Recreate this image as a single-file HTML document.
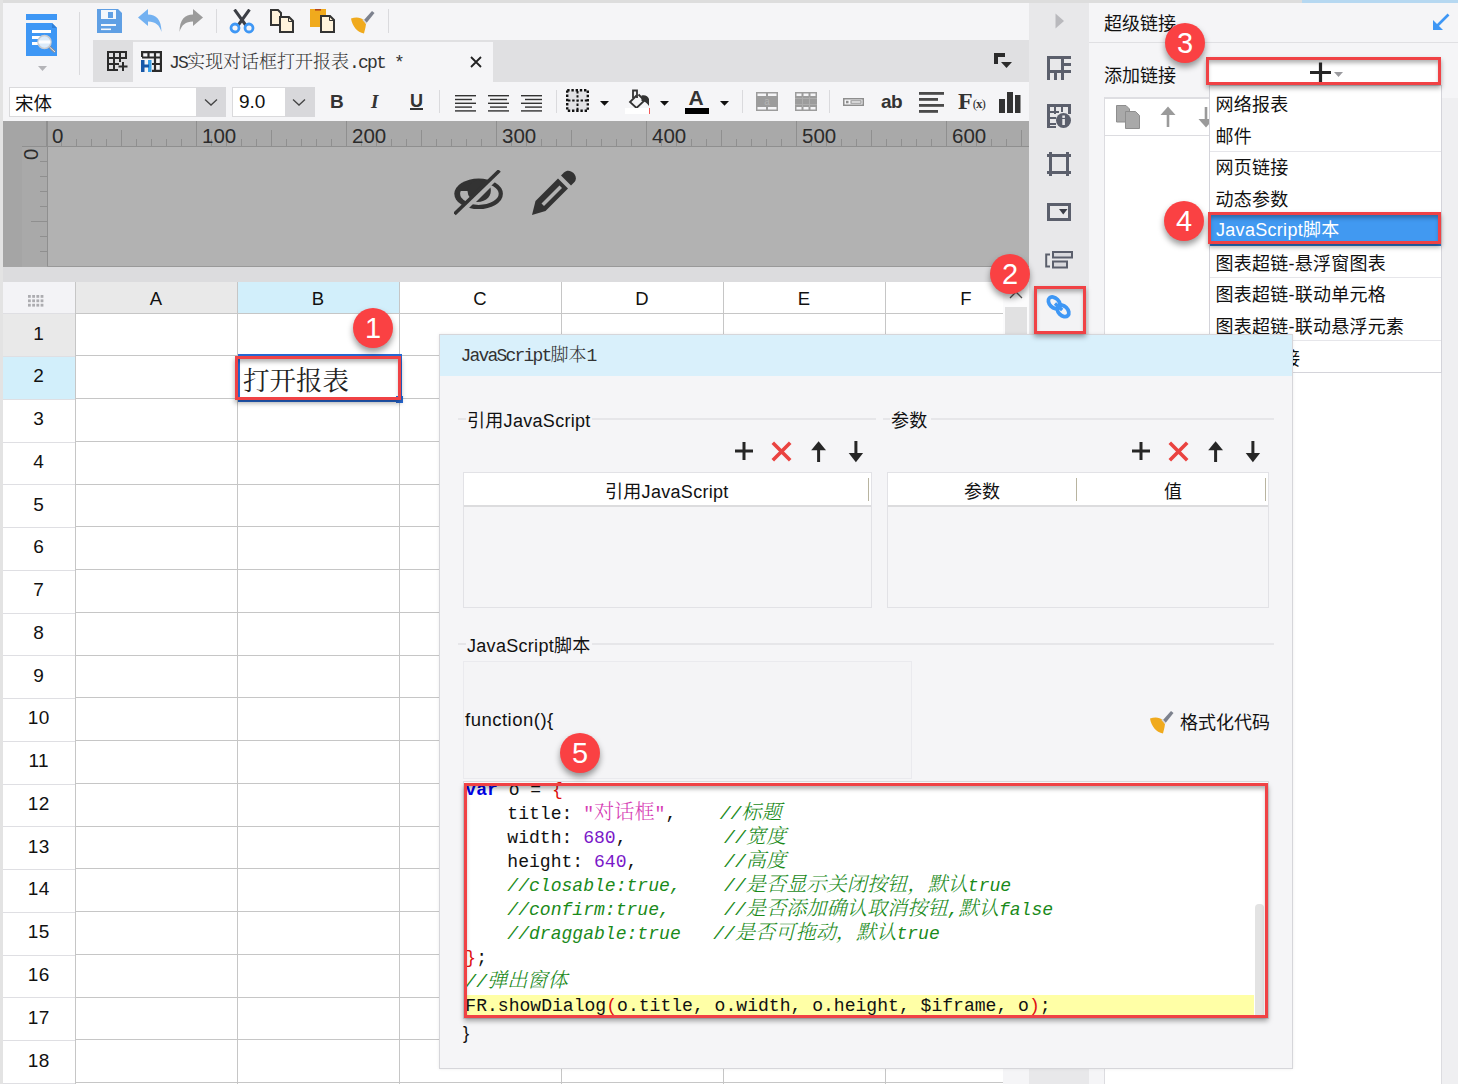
<!DOCTYPE html><html lang="zh"><head><meta charset="utf-8"><title>JS</title><style>
*{box-sizing:border-box;margin:0;padding:0}
html,body{width:1458px;height:1084px;overflow:hidden;background:#f5f5f7}
body{position:relative;font-family:"Liberation Sans","Noto Sans CJK SC",sans-serif;color:#111;font-size:18px}
.a{position:absolute}
.t{position:absolute;white-space:nowrap;line-height:1}
.song{font-family:"Liberation Serif","Noto Serif CJK SC",serif;font-weight:300}
.song i{font-style:normal;font-family:"Liberation Mono",monospace;font-weight:400;letter-spacing:-1.8px}
.badge{position:absolute;width:40px;height:40px;border-radius:50%;background:#fa4143;color:#fff;font-size:29px;line-height:40px;text-align:center;box-shadow:0 4px 6px rgba(0,0,0,.4);font-family:"Liberation Sans",sans-serif}
.redbox{position:absolute;border:3px solid #f04245;box-shadow:0 3px 5px rgba(0,0,0,.35), inset 0 4px 4px -1px rgba(0,0,0,.3)}
.mono{font-family:"Liberation Mono","Noto Serif CJK SC",monospace}
.mono u{display:inline-block;width:42px;text-decoration:none}
.mono b{font-weight:300;font-size:20.2px;line-height:0;font-family:"Liberation Serif","Noto Serif CJK SC",serif}
</style></head><body>
<div class="a" style="left:0;top:0;width:1302px;height:3px;background:#dddddd"></div>
<div class="a" style="left:1302px;top:0;width:156px;height:3px;background:#b6d8f1"></div>
<div class="a" style="left:0;top:0;width:3px;height:1084px;background:#e3e3e3"></div>
<div class="a" style="left:93px;top:40px;width:936px;height:42px;background:#e0e0e2"></div>
<div class="a" style="left:93px;top:40px;width:40px;height:42px;background:#dedee0"></div>
<div class="a" style="left:133px;top:42px;width:360px;height:40px;background:#f5f5f7"></div>
<div class="t song" style="left:169px;top:53px;font-size:18px;color:#333"><i>JS</i>实现对话框打开报表<i>.cpt *</i></div>
<div class="a" style="left:9px;top:87px;width:217px;height:30px;background:#fff;border:1px solid #dadadc"></div>
<div class="a" style="left:196px;top:87px;width:30px;height:30px;background:#d8d8db"></div>
<div class="t" style="left:15px;top:94.5px;font-size:18.5px">宋体</div>
<div class="a" style="left:232px;top:87px;width:83px;height:30px;background:#fff;border:1px solid #dadadc"></div>
<div class="a" style="left:285px;top:87px;width:30px;height:30px;background:#d8d8db"></div>
<div class="t" style="left:239px;top:92px;font-size:19px">9.0</div>
<div class="a" style="left:3px;top:121px;width:1026px;height:146px;background:#a9a9a9"></div>
<div class="a" style="left:3px;top:121px;width:19px;height:146px;background:#a5a5a5"></div>
<div class="a" style="left:22px;top:121px;width:25px;height:25px;background:#a5a5a5"></div>
<div class="a" style="left:48px;top:147px;width:981px;height:119px;background:#b2b2b2"></div>
<svg class="a" style="left:0;top:0" width="1029" height="268" viewBox="0 0 1029 268"><g stroke="#8f8f8f" stroke-width="1" shape-rendering="crispEdges"><line x1="47" y1="146.5" x2="1029" y2="146.5"/><line x1="47.5" y1="121" x2="47.5" y2="267"/><line x1="22" y1="146.5" x2="47" y2="146.5"/><line x1="47" y1="266.5" x2="1029" y2="266.5" stroke="#999"/><line x1="46.5" y1="121" x2="46.5" y2="146"/><line x1="61.5" y1="139" x2="61.5" y2="146"/><line x1="76.5" y1="139" x2="76.5" y2="146"/><line x1="91.5" y1="139" x2="91.5" y2="146"/><line x1="106.5" y1="139" x2="106.5" y2="146"/><line x1="121.5" y1="130" x2="121.5" y2="146"/><line x1="136.5" y1="139" x2="136.5" y2="146"/><line x1="151.5" y1="139" x2="151.5" y2="146"/><line x1="166.5" y1="139" x2="166.5" y2="146"/><line x1="181.5" y1="139" x2="181.5" y2="146"/><line x1="196.5" y1="121" x2="196.5" y2="146"/><line x1="211.5" y1="139" x2="211.5" y2="146"/><line x1="226.5" y1="139" x2="226.5" y2="146"/><line x1="241.5" y1="139" x2="241.5" y2="146"/><line x1="256.5" y1="139" x2="256.5" y2="146"/><line x1="271.5" y1="130" x2="271.5" y2="146"/><line x1="286.5" y1="139" x2="286.5" y2="146"/><line x1="301.5" y1="139" x2="301.5" y2="146"/><line x1="316.5" y1="139" x2="316.5" y2="146"/><line x1="331.5" y1="139" x2="331.5" y2="146"/><line x1="346.5" y1="121" x2="346.5" y2="146"/><line x1="361.5" y1="139" x2="361.5" y2="146"/><line x1="376.5" y1="139" x2="376.5" y2="146"/><line x1="391.5" y1="139" x2="391.5" y2="146"/><line x1="406.5" y1="139" x2="406.5" y2="146"/><line x1="421.5" y1="130" x2="421.5" y2="146"/><line x1="436.5" y1="139" x2="436.5" y2="146"/><line x1="451.5" y1="139" x2="451.5" y2="146"/><line x1="466.5" y1="139" x2="466.5" y2="146"/><line x1="481.5" y1="139" x2="481.5" y2="146"/><line x1="496.5" y1="121" x2="496.5" y2="146"/><line x1="511.5" y1="139" x2="511.5" y2="146"/><line x1="526.5" y1="139" x2="526.5" y2="146"/><line x1="541.5" y1="139" x2="541.5" y2="146"/><line x1="556.5" y1="139" x2="556.5" y2="146"/><line x1="571.5" y1="130" x2="571.5" y2="146"/><line x1="586.5" y1="139" x2="586.5" y2="146"/><line x1="601.5" y1="139" x2="601.5" y2="146"/><line x1="616.5" y1="139" x2="616.5" y2="146"/><line x1="631.5" y1="139" x2="631.5" y2="146"/><line x1="646.5" y1="121" x2="646.5" y2="146"/><line x1="661.5" y1="139" x2="661.5" y2="146"/><line x1="676.5" y1="139" x2="676.5" y2="146"/><line x1="691.5" y1="139" x2="691.5" y2="146"/><line x1="706.5" y1="139" x2="706.5" y2="146"/><line x1="721.5" y1="130" x2="721.5" y2="146"/><line x1="736.5" y1="139" x2="736.5" y2="146"/><line x1="751.5" y1="139" x2="751.5" y2="146"/><line x1="766.5" y1="139" x2="766.5" y2="146"/><line x1="781.5" y1="139" x2="781.5" y2="146"/><line x1="796.5" y1="121" x2="796.5" y2="146"/><line x1="811.5" y1="139" x2="811.5" y2="146"/><line x1="826.5" y1="139" x2="826.5" y2="146"/><line x1="841.5" y1="139" x2="841.5" y2="146"/><line x1="856.5" y1="139" x2="856.5" y2="146"/><line x1="871.5" y1="130" x2="871.5" y2="146"/><line x1="886.5" y1="139" x2="886.5" y2="146"/><line x1="901.5" y1="139" x2="901.5" y2="146"/><line x1="916.5" y1="139" x2="916.5" y2="146"/><line x1="931.5" y1="139" x2="931.5" y2="146"/><line x1="946.5" y1="121" x2="946.5" y2="146"/><line x1="961.5" y1="139" x2="961.5" y2="146"/><line x1="976.5" y1="139" x2="976.5" y2="146"/><line x1="991.5" y1="139" x2="991.5" y2="146"/><line x1="1006.5" y1="139" x2="1006.5" y2="146"/><line x1="1021.5" y1="130" x2="1021.5" y2="146"/><line x1="40" y1="161.5" x2="47" y2="161.5"/><line x1="40" y1="176.5" x2="47" y2="176.5"/><line x1="40" y1="191.5" x2="47" y2="191.5"/><line x1="40" y1="206.5" x2="47" y2="206.5"/><line x1="31" y1="221.5" x2="47" y2="221.5"/><line x1="40" y1="236.5" x2="47" y2="236.5"/><line x1="40" y1="251.5" x2="47" y2="251.5"/></g><g font-family="Liberation Sans, sans-serif" font-size="20.5" fill="#2b2b2b"><text x="52" y="143">0</text><text x="202" y="143">100</text><text x="352" y="143">200</text><text x="502" y="143">300</text><text x="652" y="143">400</text><text x="802" y="143">500</text><text x="952" y="143">600</text><text transform="translate(38,160) rotate(-90)" x="0" y="0">0</text></g></svg>
<div class="a" style="left:3px;top:267px;width:1026px;height:15px;background:#dcdcde"></div>
<div class="a" style="left:3px;top:282px;width:1000px;height:802px;background:#fff"></div>
<div class="a" style="left:3px;top:282px;width:73px;height:31px;background:#f3f3f6"></div>
<div class="a" style="left:76px;top:282px;width:162px;height:31px;background:#e9e9e9"></div>
<div class="a" style="left:238px;top:282px;width:162px;height:31px;background:#d2effb"></div>
<div class="a" style="left:3px;top:314px;width:73px;height:42px;background:#e9e9e9"></div>
<div class="a" style="left:3px;top:356px;width:73px;height:43px;background:#d2effb"></div>
<svg class="a" style="left:0;top:0" width="1003" height="1084" viewBox="0 0 1003 1084" shape-rendering="crispEdges"><g stroke="#c6c6c6" stroke-width="1"><line x1="75.5" y1="282" x2="75.5" y2="1084"/><line x1="237.5" y1="282" x2="237.5" y2="1084"/><line x1="399.5" y1="282" x2="399.5" y2="1084"/><line x1="561.5" y1="282" x2="561.5" y2="1084"/><line x1="723.5" y1="282" x2="723.5" y2="1084"/><line x1="885.5" y1="282" x2="885.5" y2="1084"/><line x1="1047.5" y1="282" x2="1047.5" y2="1084"/><line x1="76" y1="313.5" x2="1003" y2="313.5"/><line x1="76" y1="355.5" x2="1003" y2="355.5"/><line x1="76" y1="398.5" x2="1003" y2="398.5"/><line x1="76" y1="441.5" x2="1003" y2="441.5"/><line x1="76" y1="484.5" x2="1003" y2="484.5"/><line x1="76" y1="526.5" x2="1003" y2="526.5"/><line x1="76" y1="569.5" x2="1003" y2="569.5"/><line x1="76" y1="612.5" x2="1003" y2="612.5"/><line x1="76" y1="655.5" x2="1003" y2="655.5"/><line x1="76" y1="697.5" x2="1003" y2="697.5"/><line x1="76" y1="740.5" x2="1003" y2="740.5"/><line x1="76" y1="783.5" x2="1003" y2="783.5"/><line x1="76" y1="826.5" x2="1003" y2="826.5"/><line x1="76" y1="868.5" x2="1003" y2="868.5"/><line x1="76" y1="911.5" x2="1003" y2="911.5"/><line x1="76" y1="954.5" x2="1003" y2="954.5"/><line x1="76" y1="997.5" x2="1003" y2="997.5"/><line x1="76" y1="1039.5" x2="1003" y2="1039.5"/><line x1="76" y1="1082.5" x2="1003" y2="1082.5"/></g><g stroke="#dfdfe3" stroke-width="1"><line x1="3" y1="313.5" x2="75" y2="313.5"/><line x1="3" y1="356.5" x2="75" y2="356.5"/><line x1="3" y1="399.5" x2="75" y2="399.5"/><line x1="3" y1="442.5" x2="75" y2="442.5"/><line x1="3" y1="484.5" x2="75" y2="484.5"/><line x1="3" y1="527.5" x2="75" y2="527.5"/><line x1="3" y1="570.5" x2="75" y2="570.5"/><line x1="3" y1="613.5" x2="75" y2="613.5"/><line x1="3" y1="655.5" x2="75" y2="655.5"/><line x1="3" y1="698.5" x2="75" y2="698.5"/><line x1="3" y1="741.5" x2="75" y2="741.5"/><line x1="3" y1="784.5" x2="75" y2="784.5"/><line x1="3" y1="826.5" x2="75" y2="826.5"/><line x1="3" y1="869.5" x2="75" y2="869.5"/><line x1="3" y1="912.5" x2="75" y2="912.5"/><line x1="3" y1="955.5" x2="75" y2="955.5"/><line x1="3" y1="997.5" x2="75" y2="997.5"/><line x1="3" y1="1040.5" x2="75" y2="1040.5"/><line x1="3" y1="1083.5" x2="75" y2="1083.5"/></g><g font-family="Liberation Sans, sans-serif" font-size="18.5" fill="#111" text-anchor="middle"><text x="156" y="305">A</text><text x="318" y="305">B</text><text x="480" y="305">C</text><text x="642" y="305">D</text><text x="804" y="305">E</text><text x="966" y="305">F</text><text x="38.7" y="339.7" font-size="19" letter-spacing="0.4">1</text><text x="38.7" y="382.4" font-size="19" letter-spacing="0.4">2</text><text x="38.7" y="425.2" font-size="19" letter-spacing="0.4">3</text><text x="38.7" y="467.9" font-size="19" letter-spacing="0.4">4</text><text x="38.7" y="510.7" font-size="19" letter-spacing="0.4">5</text><text x="38.7" y="553.4" font-size="19" letter-spacing="0.4">6</text><text x="38.7" y="596.2" font-size="19" letter-spacing="0.4">7</text><text x="38.7" y="638.9" font-size="19" letter-spacing="0.4">8</text><text x="38.7" y="681.7" font-size="19" letter-spacing="0.4">9</text><text x="38.7" y="724.4" font-size="19" letter-spacing="0.4">10</text><text x="38.7" y="767.2" font-size="19" letter-spacing="0.4">11</text><text x="38.7" y="809.9" font-size="19" letter-spacing="0.4">12</text><text x="38.7" y="852.7" font-size="19" letter-spacing="0.4">13</text><text x="38.7" y="895.4" font-size="19" letter-spacing="0.4">14</text><text x="38.7" y="938.2" font-size="19" letter-spacing="0.4">15</text><text x="38.7" y="980.9" font-size="19" letter-spacing="0.4">16</text><text x="38.7" y="1023.7" font-size="19" letter-spacing="0.4">17</text><text x="38.7" y="1066.5" font-size="19" letter-spacing="0.4">18</text></g></svg>
<svg class="a" style="left:28px;top:295px" width="17" height="12" viewBox="0 0 17 12"><g fill="#acacb0"><rect x="0.0" y="0.0" width="2.8" height="2.8"/><rect x="0.0" y="4.4" width="2.8" height="2.8"/><rect x="0.0" y="8.8" width="2.8" height="2.8"/><rect x="4.2" y="0.0" width="2.8" height="2.8"/><rect x="4.2" y="4.4" width="2.8" height="2.8"/><rect x="4.2" y="8.8" width="2.8" height="2.8"/><rect x="8.4" y="0.0" width="2.8" height="2.8"/><rect x="8.4" y="4.4" width="2.8" height="2.8"/><rect x="8.4" y="8.8" width="2.8" height="2.8"/><rect x="12.600000000000001" y="0.0" width="2.8" height="2.8"/><rect x="12.600000000000001" y="4.4" width="2.8" height="2.8"/><rect x="12.600000000000001" y="8.8" width="2.8" height="2.8"/></g></svg>
<div class="a" style="left:238px;top:354px;width:164px;height:48px;border:2px solid #2769d6"></div>
<div class="a" style="left:396px;top:396px;width:7px;height:7px;background:#2769d6"></div>
<div class="t" style="left:243px;top:368px;font-size:26.5px;font-family:'Liberation Serif','Noto Serif CJK SC',serif;color:#222">打开报表</div>
<div class="a" style="left:1003px;top:282px;width:26px;height:802px;background:#fbfbfc"></div>
<div class="a" style="left:1003px;top:1040px;width:26px;height:44px;background:#f5f5f7"></div>
<div class="a" style="left:1005px;top:307px;width:22px;height:720px;background:#e1e1e2"></div>
<svg class="a" style="left:1009px;top:290px" width="14" height="10" viewBox="0 0 14 10"><path d="M1 8 L7 2 L13 8" fill="none" stroke="#555" stroke-width="1.3"/></svg>
<div class="a" style="left:1029px;top:3px;width:60px;height:1081px;background:#e8e8ea"></div>
<div class="a" style="left:1037px;top:289px;width:46px;height:42px;background:#f3f3f5"></div>
<div class="a" style="left:1089px;top:42px;width:369px;height:1px;background:#e0e0e3"></div>
<div class="t" style="left:1104px;top:15px;font-size:18px">超级链接</div>
<div class="t" style="left:1104px;top:67px;font-size:18px">添加链接</div>
<div class="a" style="left:1441px;top:98px;width:17px;height:986px;background:#efeff1"></div>
<div class="a" style="left:1104px;top:97px;width:338px;height:987px;background:#fff;border:1px solid #dcdce0;border-top:2px solid #dedee2;border-bottom:0"></div>
<div class="a" style="left:1105px;top:135px;width:336px;height:1px;background:#dcdce0"></div>
<svg class="a" style="left:1116px;top:105px" width="25" height="25" viewBox="0 0 25 25" ><path d="M0.500 0.500h9.500l3.500 3.500v13H0.500z" fill="#a9a9a9" stroke="#8e8e8e" stroke-width="1"/><path d="M9.500 6.500h10l4 4v13H9.500z" fill="#a9a9a9" stroke="#8e8e8e" stroke-width="1"/></svg>
<svg class="a" style="left:1160px;top:106px" width="16" height="22" viewBox="0 0 16 22" ><path d="M8 21V5" stroke="#9a9a9a" stroke-width="2.600" fill="none"/><path d="M0.500 9l7.500 -8.500l7.500 8.500z" fill="#9a9a9a"/></svg>
<svg class="a" style="left:1198px;top:107px" width="16" height="22" viewBox="0 0 16 22" ><path d="M8 0v16" stroke="#9a9a9a" stroke-width="2.600" fill="none"/><path d="M0.500 12l7.500 8.500l7.500 -8.500z" fill="#9a9a9a"/></svg>
<div class="a" style="left:1208px;top:59px;width:231px;height:25px;background:#fff"></div>
<div class="a" style="left:1209px;top:85px;width:233px;height:288px;background:#fff;border:1px solid #d4d4da"></div>
<div class="t" style="left:1215.5px;top:96.0px;font-size:18px;letter-spacing:.25px">网络报表</div>
<div class="t" style="left:1215.5px;top:127.7px;font-size:18px;letter-spacing:.25px">邮件</div>
<div class="t" style="left:1215.5px;top:159.4px;font-size:18px;letter-spacing:.25px">网页链接</div>
<div class="t" style="left:1215.5px;top:191.1px;font-size:18px;letter-spacing:.25px">动态参数</div>
<div class="a" style="left:1210px;top:214px;width:231px;height:32px;background:#4199f1;border:1px solid #2f7fd6;border-bottom:2px solid #2f7bd0"></div>
<div class="t" style="left:1216px;top:221.3px;font-size:18px;color:#fff;letter-spacing:.3px">JavaScript脚本</div>
<div class="t" style="left:1215.5px;top:254.5px;font-size:18px;letter-spacing:.25px">图表超链-悬浮窗图表</div>
<div class="t" style="left:1215.5px;top:286.2px;font-size:18px;letter-spacing:.25px">图表超链-联动单元格</div>
<div class="t" style="left:1215.5px;top:317.9px;font-size:18px;letter-spacing:.25px">图表超链-联动悬浮元素</div>
<div class="t" style="right:158px;top:349.6px;font-size:18px">移动端超链接</div>
<div class="a" style="left:1210px;top:151px;width:231px;height:1px;background:#e6e6ea"></div>
<div class="a" style="left:1210px;top:277px;width:231px;height:1px;background:#e6e6ea"></div>
<div class="a" style="left:1210px;top:340px;width:231px;height:1px;background:#e6e6ea"></div>
<div class="a" style="left:439px;top:334px;width:854px;height:735px;background:#f5f5f7;border:1px solid #d6d6da;box-shadow:0 0 3px rgba(0,0,0,.08)"></div>
<div class="a" style="left:440px;top:335px;width:852px;height:41px;background:#d9f0fb"></div>
<div class="t song" style="left:460.5px;top:346.4px;font-size:18px;color:#333"><i>JavaScript</i>脚本<i>1</i></div>
<div class="a" style="left:458px;top:418px;width:8px;height:2px;background:#e6e6e9"></div>
<div class="a" style="left:592px;top:418px;width:284px;height:2px;background:#e6e6e9"></div>
<div class="t" style="left:467px;top:412px;font-size:18px;letter-spacing:.3px">引用JavaScript</div>
<div class="a" style="left:883px;top:418px;width:7px;height:2px;background:#e6e6e9"></div>
<div class="a" style="left:931px;top:418px;width:343px;height:2px;background:#e6e6e9"></div>
<div class="t" style="left:891px;top:412px;font-size:18px;letter-spacing:.3px">参数</div>
<div class="a" style="left:458px;top:643px;width:8px;height:2px;background:#e6e6e9"></div>
<div class="a" style="left:592px;top:643px;width:682px;height:2px;background:#e6e6e9"></div>
<div class="t" style="left:467px;top:637px;font-size:18px;letter-spacing:.3px">JavaScript脚本</div>
<div class="a" style="left:463px;top:472px;width:409px;height:136px;border:1px solid #e2e2e6;background:#f5f5f7"></div>
<div class="a" style="left:464px;top:473px;width:407px;height:32px;background:#fff"></div>
<div class="a" style="left:464px;top:505px;width:407px;height:2px;background:#dcdcde"></div>
<div class="a" style="left:887px;top:472px;width:382px;height:136px;border:1px solid #e2e2e6;background:#f5f5f7"></div>
<div class="a" style="left:888px;top:473px;width:380px;height:32px;background:#fff"></div>
<div class="a" style="left:888px;top:505px;width:380px;height:2px;background:#dcdcde"></div>
<div class="t" style="left:605px;top:483px;font-size:18px;letter-spacing:.3px">引用JavaScript</div>
<div class="t" style="left:964px;top:483px;font-size:18px">参数</div>
<div class="t" style="left:1164px;top:483px;font-size:18px">值</div>
<div class="a" style="left:868px;top:478px;width:1px;height:23px;background:#b8b4a0"></div>
<div class="a" style="left:1076px;top:478px;width:1px;height:23px;background:#b8b4a0"></div>
<div class="a" style="left:1265px;top:478px;width:1px;height:23px;background:#b8b4a0"></div>
<svg class="a" style="left:735px;top:440px" width="132" height="24" viewBox="0 0 132 24"><path d="M9 2v18M0 11h18" stroke="#262626" stroke-width="3" fill="none"/><path d="M37.800 2.800l17.400 17.400M55.200 2.800l-17.400 17.400" stroke="#ea4340" stroke-width="3.600" fill="none"/><path d="M83.600 22V5" stroke="#262626" stroke-width="3" fill="none"/><path d="M76.200 10.200l7.400 -9 7.400 9z" fill="#262626"/><path d="M120.900 1v16" stroke="#262626" stroke-width="3" fill="none"/><path d="M113.700 13l7.200 9.200 7.200 -9.200z" fill="#262626"/></svg>
<svg class="a" style="left:1132px;top:440px" width="132" height="24" viewBox="0 0 132 24"><path d="M9 2v18M0 11h18" stroke="#262626" stroke-width="3" fill="none"/><path d="M37.800 2.800l17.400 17.400M55.200 2.800l-17.400 17.400" stroke="#ea4340" stroke-width="3.600" fill="none"/><path d="M83.600 22V5" stroke="#262626" stroke-width="3" fill="none"/><path d="M76.200 10.200l7.400 -9 7.400 9z" fill="#262626"/><path d="M120.900 1v16" stroke="#262626" stroke-width="3" fill="none"/><path d="M113.700 13l7.200 9.200 7.200 -9.200z" fill="#262626"/></svg>
<div class="a" style="left:463px;top:661px;width:449px;height:118px;border:1px solid #eaeaee;background:#f4f4f6"></div>
<div class="t" style="left:465px;top:710.5px;font-size:18.5px;letter-spacing:.5px">function(){</div>
<div class="t" style="left:463px;top:1024px;font-size:18.5px">}</div>
<div class="t" style="left:1180px;top:714px;font-size:18px">格式化代码</div>
<div class="a" style="left:463px;top:781px;width:806px;height:238px;background:#fff;border:1px solid #dcdce0"></div>
<div class="a" style="left:466px;top:995px;width:788px;height:20px;background:#ffffa6"></div>
<div class="a" style="left:1255px;top:904px;width:9px;height:112px;background:#e3e3e3;border-radius:4px 4px 0 0"></div>
<div class="a mono" style="left:465.3px;top:778px;width:790px;height:240px;overflow:hidden;font-size:18.07px;line-height:24px;white-space:pre;color:#111"><span style="color:#0000e6;font-weight:bold">var</span> o = <span style="color:#e01010;">{</span>
<u></u>title: <span style="color:#d63cb4;">"<b>对话框</b>"</span>,    <span style="color:#1a8a1a;font-style:italic">//<b>标题</b></span>
<u></u>width: <span style="color:#7a18c8;">680</span>,         <span style="color:#1a8a1a;font-style:italic">//<b>宽度</b></span>
<u></u>height: <span style="color:#7a18c8;">640</span>,        <span style="color:#1a8a1a;font-style:italic">//<b>高度</b></span>
<u></u><span style="color:#1a8a1a;font-style:italic">//closable:true,    //<b>是否显示关闭按钮，默认</b>true</span>
<u></u><span style="color:#1a8a1a;font-style:italic">//confirm:true,     //<b>是否添加确认取消按钮</b>,<b>默认</b>false</span>
<u></u><span style="color:#1a8a1a;font-style:italic">//draggable:true   //<b>是否可拖动，默认</b>true</span>
<span style="color:#e01010;">}</span>;
<span style="color:#1a8a1a;font-style:italic">//<b>弹出窗体</b></span>
FR.showDialog<span style="color:#e01010;">(</span>o.title, o.width, o.height, $iframe, o<span style="color:#e01010;">)</span>;</div>
<svg class="a" style="left:26px;top:13px" width="32" height="44" viewBox="0 0 32 44" ><rect x="0" y="1" width="31" height="6" fill="#3e97f5"/><path d="M0 10h26l5 5v28H0z" fill="#3e97f5"/><path d="M26 10l5 5h-5z" fill="#2f7fd8"/><rect x="6" y="17" width="19" height="3" fill="#fff"/><rect x="6" y="23" width="8" height="3" fill="#fff"/><rect x="6" y="29" width="6" height="3" fill="#fff"/><circle cx="18.5" cy="29" r="6.5" fill="#dcebfa" stroke="#c9ccd2" stroke-width="1.6"/><rect x="12.5" y="27.5" width="12" height="3" fill="#fff" opacity=".9"/><path d="M23.5 34l5.5 5" stroke="#8d9099" stroke-width="2.6"/><path d="M23.5 34l5.5 5" stroke="#e8e8ea" stroke-width="1" /></svg>
<svg class="a" style="left:38px;top:66px" width="9" height="5" viewBox="0 0 9 5" ><path d="M0 0h9l-4.5 5z" fill="#b4b4b8"/></svg>
<div class="a" style="left:79px;top:12px;width:1px;height:63px;background:#dadadd"></div>
<div class="a" style="left:216px;top:9px;width:1px;height:24px;background:#dadadd"></div>
<div class="a" style="left:388px;top:9px;width:1px;height:24px;background:#dadadd"></div>
<div class="a" style="left:439px;top:90px;width:1px;height:23px;background:#dadadd"></div>
<div class="a" style="left:556px;top:90px;width:1px;height:23px;background:#dadadd"></div>
<div class="a" style="left:742px;top:90px;width:1px;height:23px;background:#dadadd"></div>
<div class="a" style="left:829px;top:90px;width:1px;height:23px;background:#dadadd"></div>
<svg class="a" style="left:97px;top:9px" width="25" height="24" viewBox="0 0 25 24" ><path d="M0 0h21l4 4v20H0z" fill="#5f9fe4"/><rect x="4" y="1" width="15" height="9" fill="#f3f7fc"/><rect x="11" y="3" width="5" height="6" fill="#5f9fe4"/><rect x="4" y="15" width="15" height="2" fill="#f3f7fc"/><rect x="4" y="19.5" width="10" height="1.6" fill="#f3f7fc"/></svg>
<svg class="a" style="left:138px;top:9px" width="25" height="24" viewBox="0 0 25 24" ><path d="M0 8.5L10 0v5.5c8 0 13.5 5 13.5 17.5c-2-7-6-10.5-13.500-10.500V17z" fill="#73b1f1"/></svg>
<svg class="a" style="left:178px;top:9px" width="25" height="24" viewBox="0 0 25 24" ><g transform="translate(25,0) scale(-1,1)"><path d="M0 8.5L10 0v5.5c8 0 13.5 5 13.5 17.5c-2-7-6-10.5-13.500-10.500V17z" fill="#9b9b9b"/></g></svg>
<svg class="a" style="left:229px;top:9px" width="26" height="25" viewBox="0 0 26 25" ><path d="M5.500 0.500L17 16.500M20.500 0.500L9 16.500" stroke="#3c3f46" stroke-width="3" fill="none"/><circle cx="6" cy="19" r="4" fill="none" stroke="#3e97f5" stroke-width="2.800"/><circle cx="20" cy="19" r="4" fill="none" stroke="#3e97f5" stroke-width="2.800"/></svg>
<svg class="a" style="left:270px;top:9px" width="25" height="25" viewBox="0 0 25 25" ><path d="M1 1h7l3 3v12H1z" fill="#fff3dc" stroke="#333" stroke-width="2"/><path d="M10 8h9l4 4v11H10z" fill="#fff3dc" stroke="#333" stroke-width="2"/><path d="M18.500 8v4.500h4.500" fill="none" stroke="#333" stroke-width="1"/></svg>
<svg class="a" style="left:310px;top:9px" width="26" height="25" viewBox="0 0 26 25" ><rect x="0" y="0" width="16" height="18" fill="#f0aa1d"/><rect x="5" y="0" width="6" height="1.600" fill="#b5441c"/><path d="M11 7h9l4 4v12H11z" fill="#fff3dc" stroke="#333" stroke-width="2"/><path d="M19.500 7v4.500h4.500" fill="none" stroke="#333" stroke-width="1"/></svg>
<svg class="a" style="left:351px;top:10px" width="25" height="24" viewBox="0 0 25 24" ><path d="M0 8.500c5 -1.500 9.500 -1.500 13 2l2 3.500c-0.500 4.500 -1.500 7 -2 9.500c-7 -1.500 -11.500 -7 -13 -15z" fill="#f0aa1d"/><path d="M12.500 10.500l8.500 -9.500l2.500 2l-8 10z" fill="#7d828e"/><path d="M12 9.500l3.500 4" stroke="#d8d8dc" stroke-width="1.500"/></svg>
<svg class="a" style="left:107px;top:51px" width="21" height="21" viewBox="0 0 21 21" ><g fill="none" stroke="#2b2b2b" stroke-width="2"><path d="M1 1h18v6H1zM1 7v12h10M1 13h11M7 1v18M13 1v10"/><path d="M16 11v9M11.500 15.500h9"/></g></svg>
<svg class="a" style="left:141px;top:51px" width="21" height="21" viewBox="0 0 21 21" ><g fill="none" stroke="#2b2b2b" stroke-width="2.200"><path d="M1.100 6V1.100h18.800v18.800H11M1 6.500h19M11 13h9M7.500 1v5M14 1v19"/></g><rect x="0" y="9" width="3.500" height="12" fill="#1858a8"/><rect x="7" y="9" width="3.500" height="12" fill="#3aa0e8"/><rect x="2" y="13.500" width="6" height="3" fill="#1858a8"/></svg>
<svg class="a" style="left:470px;top:56px" width="12" height="12" viewBox="0 0 12 12" ><path d="M1 1l10 10M11 1L1 11" stroke="#222" stroke-width="1.800"/></svg>
<svg class="a" style="left:994px;top:53px" width="19" height="17" viewBox="0 0 19 17" ><path d="M0 0h11v4H4v7H0z" fill="#2b2b2b"/><path d="M7 9h11l-5.500 6z" fill="#2b2b2b"/></svg>
<svg class="a" style="left:204px;top:98px" width="14" height="9" viewBox="0 0 14 9" ><path d="M1 1.500l6 5.500l6 -5.500" fill="none" stroke="#444" stroke-width="1.300"/></svg>
<svg class="a" style="left:292px;top:98px" width="14" height="9" viewBox="0 0 14 9" ><path d="M1 1.500l6 5.500l6 -5.500" fill="none" stroke="#444" stroke-width="1.300"/></svg>
<div class="t" style="left:330px;top:92px;font-size:19px;font-weight:bold;color:#333;font-family:'Liberation Sans',sans-serif">B</div>
<div class="t" style="left:371px;top:92px;font-size:19px;font-weight:bold;font-style:italic;color:#333;font-family:'Liberation Serif',serif">I</div>
<div class="t" style="left:410px;top:92px;font-size:18px;font-weight:bold;color:#333;font-family:'Liberation Sans',sans-serif">U</div>
<div class="a" style="left:410px;top:108px;width:13px;height:2px;background:#333"></div>
<svg class="a" style="left:455px;top:95px" width="21" height="17" viewBox="0 0 21 17" ><rect x="0" y="0.0" width="21" height="1.400" fill="#333"/><rect x="0" y="3.8" width="17" height="1.400" fill="#333"/><rect x="0" y="7.6" width="21" height="1.400" fill="#333"/><rect x="0" y="11.399999999999999" width="17" height="1.400" fill="#333"/><rect x="0" y="15.2" width="21" height="1.400" fill="#333"/></svg>
<svg class="a" style="left:488px;top:95px" width="21" height="17" viewBox="0 0 21 17" ><rect x="0.0" y="0.0" width="21" height="1.400" fill="#333"/><rect x="2.0" y="3.8" width="17" height="1.400" fill="#333"/><rect x="0.0" y="7.6" width="21" height="1.400" fill="#333"/><rect x="2.0" y="11.399999999999999" width="17" height="1.400" fill="#333"/><rect x="0.0" y="15.2" width="21" height="1.400" fill="#333"/></svg>
<svg class="a" style="left:521px;top:95px" width="21" height="17" viewBox="0 0 21 17" ><rect x="0" y="0.0" width="21" height="1.400" fill="#333"/><rect x="4" y="3.8" width="17" height="1.400" fill="#333"/><rect x="0" y="7.6" width="21" height="1.400" fill="#333"/><rect x="4" y="11.399999999999999" width="17" height="1.400" fill="#333"/><rect x="0" y="15.2" width="21" height="1.400" fill="#333"/></svg>
<svg class="a" style="left:566px;top:89px" width="23" height="23" viewBox="0 0 23 23" ><rect x="1.500" y="1.500" width="20" height="20" fill="#e2e2e5"/><g fill="none" stroke="#111" stroke-width="2.400" stroke-dasharray="2.400 1.800"><path d="M1.200 1.200h20.600v20.600H1.200z"/><path d="M11.500 2v19M2 11.500h19" stroke-width="2"/></g></svg>
<svg class="a" style="left:600px;top:101px" width="9" height="5" viewBox="0 0 9 5" ><path d="M0 0h9l-4.500 4.800z" fill="#111"/></svg>
<svg class="a" style="left:660px;top:101px" width="9" height="5" viewBox="0 0 9 5" ><path d="M0 0h9l-4.500 4.800z" fill="#111"/></svg>
<svg class="a" style="left:720px;top:101px" width="9" height="5" viewBox="0 0 9 5" ><path d="M0 0h9l-4.500 4.800z" fill="#111"/></svg>
<svg class="a" style="left:628px;top:89px" width="23" height="20" viewBox="0 0 23 20" ><g fill="none" stroke="#333" stroke-width="1.800"><path d="M8.500 6.500l-6.500 6.500l6.500 6l8 -7.500l-6 -6"/><path d="M5 9V1.500h4V9"/></g><path d="M13.500 6.500c3.500 -1 6.500 0.500 7.500 3.500v7c-2 -3 -4 -5 -7.500 -5z" fill="#333"/></svg>
<div class="a" style="left:625px;top:108px;width:25px;height:6px;background:#fff"></div>
<div class="a" style="left:649px;top:108px;width:1px;height:6px;background:#f25a5a"></div>
<div class="t" style="left:688.500px;top:86.500px;font-size:21px;font-weight:bold;color:#333;font-family:'Liberation Sans',sans-serif">A</div>
<div class="a" style="left:685px;top:108px;width:24px;height:6px;background:#000"></div>
<svg class="a" style="left:756px;top:92px" width="22" height="19" viewBox="0 0 22 19" ><rect x="0" y="0" width="22" height="19" fill="#9c9c9c"/><rect x="1.500" y="1.500" width="8.500" height="2.500" fill="#f5f5f7"/><rect x="12" y="1.500" width="8.500" height="2.500" fill="#f5f5f7"/><rect x="1.500" y="15" width="8.500" height="2.500" fill="#f5f5f7"/><rect x="12" y="15" width="8.500" height="2.500" fill="#f5f5f7"/><text x="11" y="13" font-family="Liberation Sans, sans-serif" font-size="10" fill="#b4b4b4" text-anchor="middle">a</text></svg>
<svg class="a" style="left:795px;top:92px" width="22" height="19" viewBox="0 0 22 19" ><rect x="0" y="0" width="22" height="19" fill="#9c9c9c"/><rect x="1.5" y="1.5" width="5" height="2.500" fill="#f5f5f7"/><rect x="1.5" y="15" width="5" height="2.500" fill="#f5f5f7"/><rect x="8.5" y="1.5" width="5" height="2.500" fill="#f5f5f7"/><rect x="8.5" y="15" width="5" height="2.500" fill="#f5f5f7"/><rect x="15.5" y="1.5" width="5" height="2.500" fill="#f5f5f7"/><rect x="15.5" y="15" width="5" height="2.500" fill="#f5f5f7"/><path d="M0 6.500h22M0 12.500h22M7.500 5v10M14.500 5v10" stroke="#adadad" stroke-width="1" fill="none"/></svg>
<svg class="a" style="left:843px;top:98px" width="21" height="8" viewBox="0 0 21 8" ><rect x="0.750" y="0.750" width="19.500" height="6.500" fill="none" stroke="#8e8e8e" stroke-width="1.500"/><rect x="3" y="2.800" width="2.500" height="2.500" fill="#8e8e8e"/><rect x="8" y="2.800" width="10" height="2.400" fill="none" stroke="#8e8e8e" stroke-width="1"/></svg>
<div class="t" style="left:881px;top:92px;font-size:19px;font-weight:bold;color:#333;font-family:'Liberation Sans',sans-serif;letter-spacing:-0.5px">ab</div>
<svg class="a" style="left:919px;top:92px" width="25" height="21" viewBox="0 0 25 21" ><rect x="0" y="0" width="25" height="2.800" fill="#4a4a4a"/><rect x="0" y="6" width="19" height="2.800" fill="#4a4a4a"/><rect x="0" y="12" width="25" height="2.800" fill="#4a4a4a"/><rect x="0" y="18" width="19" height="2.800" fill="#4a4a4a"/></svg>
<div class="t" style="left:958px;top:89px;font-size:24px;font-weight:bold;color:#333;font-family:'Liberation Serif',serif">F<span style="font-size:13px;font-weight:normal;position:relative;top:-1px;letter-spacing:-1px">(<b>x</b>)</span></div>
<svg class="a" style="left:999px;top:92px" width="22" height="21" viewBox="0 0 22 21" ><rect x="0" y="7" width="6" height="14" fill="#333"/><rect x="8" y="0" width="6" height="21" fill="#333"/><rect x="16" y="3" width="5.500" height="18" fill="#333"/></svg>
<svg class="a" style="left:454px;top:170px" width="49" height="46" viewBox="0 0 49 46" ><defs><clipPath id="eA"><path d="M-6 50L50 -6H-6z"/></clipPath><clipPath id="eB"><path d="M4.500 48.500L51 2V50H4z"/></clipPath><clipPath id="eC"><rect x="0" y="21" width="49" height="30"/></clipPath></defs><g clip-path="url(#eA)"><ellipse cx="24.600" cy="23.800" rx="24.300" ry="15.300" fill="#333"/><g clip-path="url(#eC)"><ellipse cx="24.600" cy="23.800" rx="18.500" ry="10.500" fill="#b2b2b2"/></g><circle cx="24" cy="21" r="10.500" fill="#333"/></g><g clip-path="url(#eB)"><ellipse cx="24.600" cy="23.800" rx="22.200" ry="13.200" fill="none" stroke="#333" stroke-width="4.200"/><path d="M22 32L36.500 17.500c2 8 -4 15 -14.500 14.500z" fill="#333"/></g><path d="M0.500 44L45.500 0.500" stroke="#333" stroke-width="3.600"/></svg>
<svg class="a" style="left:531px;top:170px" width="46" height="46" viewBox="0 0 46 46" ><path d="M1 45l3.500 -14L27 8.500l10 10L14.500 41z" fill="#333"/><path d="M30 5.500l3 -3c3 -3 7 -2 9.500 0.500s3.500 6.500 0.500 9.500l-3 3z" fill="#333"/><path d="M10.500 33.500l18 -18l2.500 2.500l-18 18z" fill="#b2b2b2"/></svg>
<svg class="a" style="left:1055px;top:13px" width="10" height="16" viewBox="0 0 10 16" ><path d="M0.500 0.500v15l8.500 -7.500z" fill="#b9b9bd"/></svg>
<svg class="a" style="left:1047px;top:56px" width="24" height="24" viewBox="0 0 24 24" ><g fill="none" stroke="#5b5f6c" stroke-width="3"><path d="M0 1.500h24M1.500 0v24M15.500 0v24M0 15.500h24M15 8.500h9M8.500 15v9"/></g></svg>
<svg class="a" style="left:1047px;top:104px" width="24" height="24" viewBox="0 0 24 24" ><g fill="none" stroke="#5b5f6c"><path d="M1.500 0v24M0 1.500h24" stroke-width="3"/><path d="M22.500 0v10" stroke-width="3"/><path d="M0 8h12M0 14h9M0 20h9M8 0v10M15 0v8" stroke-width="2"/><path d="M0 23h9" stroke-width="2"/></g><circle cx="16.500" cy="16.500" r="7.500" fill="#5b5f6c"/><rect x="15.300" y="15" width="2.600" height="6" fill="#e8e8ea"/><rect x="15.300" y="11.500" width="2.600" height="2.400" fill="#e8e8ea"/></svg>
<svg class="a" style="left:1047px;top:152px" width="24" height="24" viewBox="0 0 24 24" ><g fill="none" stroke="#5b5f6c" stroke-width="3"><path d="M3.500 0v24M20.500 0v24M0 3.500h24M0 20.500h24"/></g></svg>
<svg class="a" style="left:1047px;top:203px" width="24" height="18" viewBox="0 0 24 18" ><rect x="1.500" y="1.500" width="21" height="15" fill="none" stroke="#5b5f6c" stroke-width="3"/><path d="M12 6h8.500l-4.250 5.500z" fill="#3a3d47"/></svg>
<svg class="a" style="left:1045px;top:251px" width="28" height="18" viewBox="0 0 28 18" ><path d="M5 3.500H1.200v12H5" fill="none" stroke="#5b5f6c" stroke-width="2"/><rect x="8" y="1" width="19" height="5.500" fill="#d9d9dd" stroke="#5b5f6c" stroke-width="2"/><rect x="8" y="10.500" width="14" height="6" fill="#d9d9dd" stroke="#5b5f6c" stroke-width="2"/></svg>
<svg class="a" style="left:1045px;top:294px" width="27" height="26" viewBox="0 0 27 26" ><g fill="none" stroke="#3e97f5" stroke-width="3.800"><ellipse cx="0" cy="0" rx="6.800" ry="4.700" transform="translate(9.200,8.800) rotate(45)"/><ellipse cx="0" cy="0" rx="6.800" ry="4.700" transform="translate(18,16.800) rotate(45)"/><path d="M10 9.500L17.200 16" stroke-width="3.400"/></g></svg>
<svg class="a" style="left:1432px;top:13px" width="18" height="18" viewBox="0 0 18 18" ><path d="M16.500 1.500L5 13" stroke="#3e97f5" stroke-width="2.600"/><path d="M1 17V7l10 10z" fill="#3e97f5"/></svg>
<svg class="a" style="left:1310px;top:62px" width="34" height="21" viewBox="0 0 34 21" ><path d="M10.500 0.500v20M0 10.500h21" stroke="#262626" stroke-width="3.200" fill="none"/><path d="M24 10h9l-4.500 5z" fill="#9a9a9e"/></svg>
<svg class="a" style="left:1150px;top:710px" width="25" height="24" viewBox="0 0 25 24" ><path d="M0 8.500c5 -1.500 9.500 -1.500 13 2l2 3.500c-0.500 4.500 -1.500 7 -2 9.500c-7 -1.500 -11.500 -7 -13 -15z" fill="#f0aa1d"/><path d="M12.500 10.500l8.500 -9.500l2.500 2l-8 10z" fill="#7d828e"/><path d="M12 9.500l3.500 4" stroke="#d8d8dc" stroke-width="1.500"/></svg>
<div class="redbox" style="left:235px;top:356px;width:166px;height:44px"></div>
<div class="redbox" style="left:1206px;top:57px;width:235px;height:28px"></div>
<div class="redbox" style="left:1208px;top:212px;width:233px;height:32px"></div>
<div class="redbox" style="left:1034px;top:286px;width:52px;height:48px"></div>
<div class="redbox" style="left:464px;top:783px;width:804px;height:235px"></div>
<div class="badge" style="left:353px;top:308px">1</div>
<div class="badge" style="left:990px;top:254px">2</div>
<div class="badge" style="left:1165px;top:23px">3</div>
<div class="badge" style="left:1164px;top:201px">4</div>
<div class="badge" style="left:560px;top:733px">5</div>
</body></html>
